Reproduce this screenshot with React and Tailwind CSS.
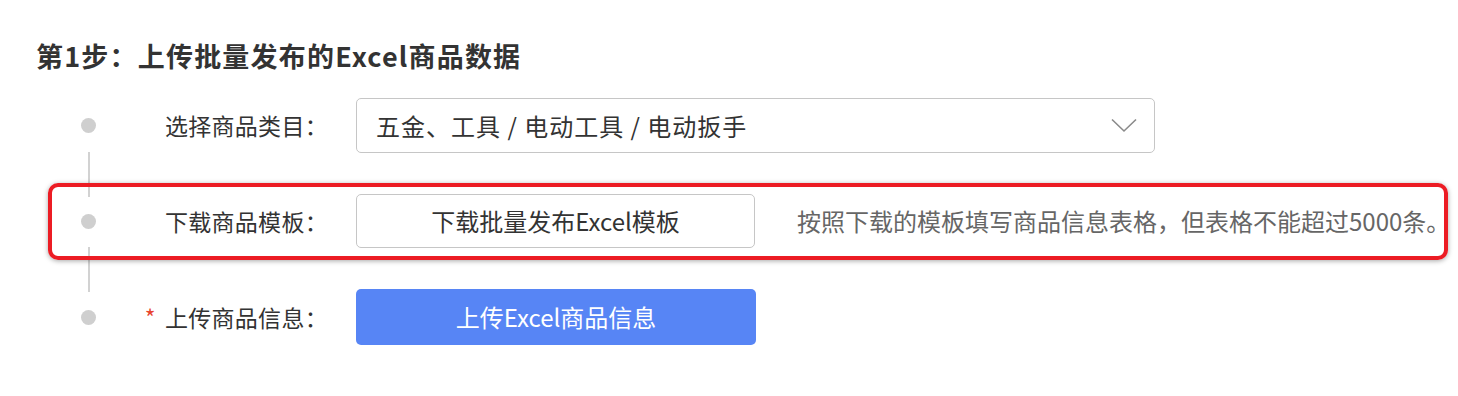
import React from "react";

const FONT = { fontFamily: '"Noto Sans CJK SC", "Noto Sans", sans-serif' };

function Dot() {
  return <div className="ml-[81px] w-[15px] h-[15px] shrink-0 rounded-full bg-[#cfcfcf]" />;
}

function Connector() {
  return (
    <div className="h-[41px] flex">
      <div className="ml-[88px] w-[2px] bg-[#d2d2d2] h-[45px] -mt-[1px]" />
    </div>
  );
}

function Label({ children, required }) {
  return (
    <div className="w-[234px] shrink-0 pr-[2px] text-right text-[23px] tracking-[0.3px] text-[#333] leading-none">
      {required && <span className="text-[#e8442f] mr-[9px]">*</span>}
      {children}
    </div>
  );
}

export default function App() {
  return (
    <div className="w-[1458px] h-[396px] bg-white overflow-hidden" style={FONT}>
      <h2 className="pl-[36px] pt-[39px] text-[27px] leading-[33px] font-bold tracking-[1.2px] text-[#333]">
        第1步：上传批量发布的Excel商品数据
      </h2>
      <div className="mt-[26px] flex flex-col">
        <div className="flex items-center h-[55px]">
          <Dot />
          <Label>选择商品类目：</Label>
          <div className="ml-[26px] w-[799px] h-[55px] border border-[#c6c6c6] rounded-[5px] pl-[19px] pr-[17px] flex items-center justify-between text-[24px] tracking-[1px] text-[#333]">
            <span>五金、工具 / 电动工具 / 电动扳手</span>
            <svg width="26" height="15" viewBox="0 0 26 15" fill="none">
              <path d="M1 1.5 L13 13 L25 1.5" stroke="#8a8a8a" strokeWidth="1.6" />
            </svg>
          </div>
        </div>
        <Connector />
        <div className="relative flex items-center h-[54px]">
          <div className="absolute left-[48px] top-[-11px] bottom-[-12px] w-[1400px] border-[4px] border-[#ec1c24] rounded-[10px] shadow-[0_1px_5px_rgba(0,0,0,0.35)] pointer-events-none" />
          <Dot />
          <Label>下载商品模板：</Label>
          <div className="ml-[26px] w-[399px] h-[54px] border border-[#c6c6c6] rounded-[5px] flex items-center justify-center text-[24px] text-[#333]">
            下载批量发布Excel模板
          </div>
          <div className="ml-[42px] text-[24px] text-[#666]">
            按照下载的模板填写商品信息表格，但表格不能超过5000条。
          </div>
        </div>
        <Connector />
        <div className="flex items-center h-[56px]">
          <Dot />
          <Label required>上传商品信息：</Label>
          <div className="ml-[26px] w-[400px] h-[56px] rounded-[5px] bg-[#5785f5] flex items-center justify-center text-[24px] text-white">
            上传Excel商品信息
          </div>
        </div>
      </div>
    </div>
  );
}
